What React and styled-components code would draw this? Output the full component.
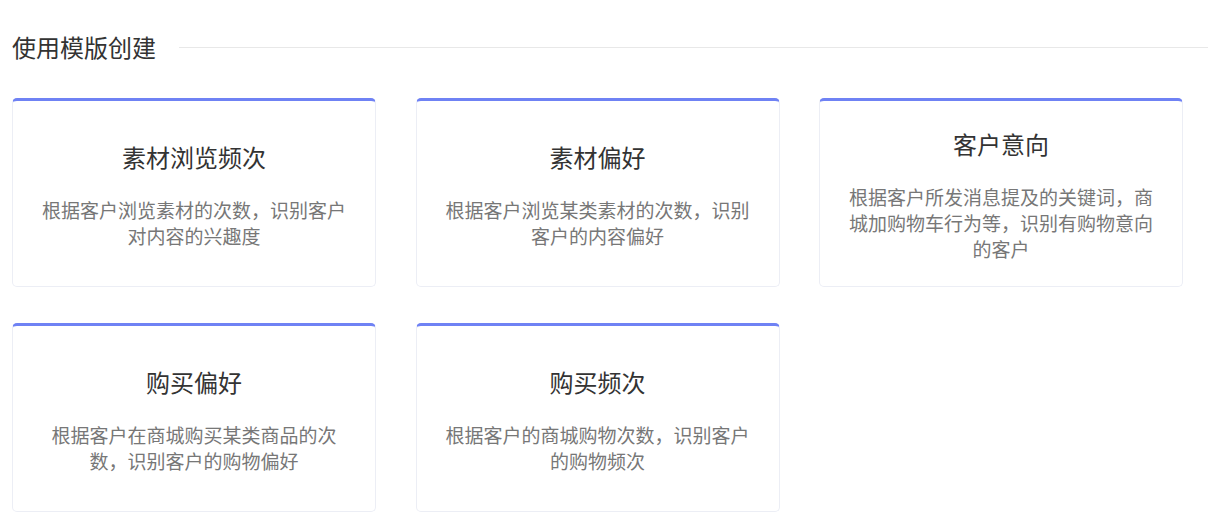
import React from "react";
import styled, { createGlobalStyle } from "styled-components";

const GlobalStyle = createGlobalStyle`
  body {
    margin: 0;
    background: #fff;
    font-family: "Noto Sans CJK SC", "Noto Sans", sans-serif;
  }
`;

const Page = styled.div`
  padding: 31px 0 0 12px;
`;

const Header = styled.div`
  display: flex;
  align-items: center;
  gap: 23px;
  margin-bottom: 35px;
`;

const HeaderTitle = styled.h2`
  margin: 0;
  font-size: 24px;
  line-height: 32px;
  font-weight: 400;
  color: #333;
`;

const HeaderLine = styled.div`
  flex: 1;
  height: 1px;
  background: #e8e8e8;
`;

const Grid = styled.div`
  display: grid;
  grid-template-columns: repeat(3, 364px);
  column-gap: 39.5px;
  row-gap: 36px;
`;

const Card = styled.div`
  box-sizing: border-box;
  height: 189px;
  border: 1px solid #eceef5;
  border-top: 3px solid #6f82f4;
  border-radius: 5px;
  padding: 2px 28px 0;
  display: flex;
  flex-direction: column;
  align-items: center;
  justify-content: center;
  text-align: center;
  cursor: pointer;
  background: #fff;
`;

const CardTitle = styled.div`
  font-size: 24px;
  line-height: 32px;
  color: #333;
  margin-bottom: 24px;
`;

const CardDesc = styled.div`
  font-size: 19px;
  line-height: 26px;
  color: #777;
`;

const templates = [
  { title: "素材浏览频次", desc: "根据客户浏览素材的次数，识别客户对内容的兴趣度" },
  { title: "素材偏好", desc: "根据客户浏览某类素材的次数，识别客户的内容偏好" },
  {
    title: "客户意向",
    desc: "根据客户所发消息提及的关键词，商城加购物车行为等，识别有购物意向的客户",
  },
  { title: "购买偏好", desc: "根据客户在商城购买某类商品的次数，识别客户的购物偏好" },
  { title: "购买频次", desc: "根据客户的商城购物次数，识别客户的购物频次" },
];

const App = () => {
  return (
    <>
      <GlobalStyle />
      <Page>
        <Header>
          <HeaderTitle>使用模版创建</HeaderTitle>
          <HeaderLine />
        </Header>
        <Grid>
          {templates.map((item, index) => (
            <Card key={index}>
              <CardTitle>{item.title}</CardTitle>
              <CardDesc>{item.desc}</CardDesc>
            </Card>
          ))}
        </Grid>
      </Page>
    </>
  );
};

export default App;
